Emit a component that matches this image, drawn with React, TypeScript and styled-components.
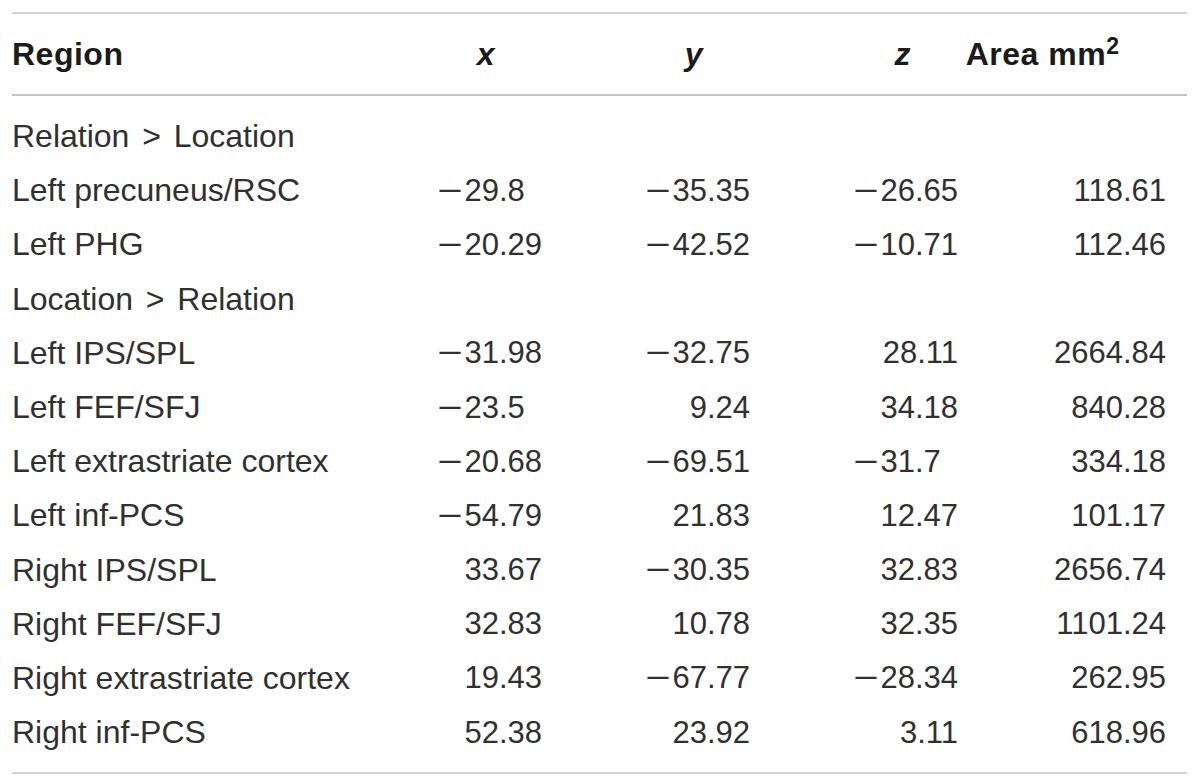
import React from 'react';
import styled, {createGlobalStyle} from 'styled-components';

const GlobalStyle = createGlobalStyle`
  html, body {
    margin: 0;
    padding: 0;
    background: #ffffff;
  }
  body {
    font-family: "Liberation Sans", Arial, sans-serif;
  }
`;

type Row = {
  region: string;
  values?: string[];
};

const rows: Row[] = [
  {region: 'Relation > Location'},
  {region: 'Left precuneus/RSC', values: ['-29.8', '-35.35', '-26.65', '118.61']},
  {region: 'Left PHG', values: ['-20.29', '-42.52', '-10.71', '112.46']},
  {region: 'Location > Relation'},
  {region: 'Left IPS/SPL', values: ['-31.98', '-32.75', '28.11', '2664.84']},
  {region: 'Left FEF/SFJ', values: ['-23.5', '9.24', '34.18', '840.28']},
  {region: 'Left extrastriate cortex', values: ['-20.68', '-69.51', '-31.7', '334.18']},
  {region: 'Left inf-PCS', values: ['-54.79', '21.83', '12.47', '101.17']},
  {region: 'Right IPS/SPL', values: ['33.67', '-30.35', '32.83', '2656.74']},
  {region: 'Right FEF/SFJ', values: ['32.83', '10.78', '32.35', '1101.24']},
  {region: 'Right extrastriate cortex', values: ['19.43', '-67.77', '-28.34', '262.95']},
  {region: 'Right inf-PCS', values: ['52.38', '23.92', '3.11', '618.96']},
];

// the group labels have a wider gap round the ">" sign
function RegionLabel({text}: {text: string}): JSX.Element {
  const parts = text.split(' > ');
  if (parts.length < 2) return <>{text}</>;
  return (
    <>
      {parts[0]}
      <Gt>&gt;</Gt>
      {parts[1]}
    </>
  );
}

// numbers line up on the decimal point, so short ones get an invisible digit
function NumberCell({value}: {value: string}): JSX.Element {
  const negative = value.startsWith('-');
  const digits = negative ? value.slice(1) : value;
  const decimals = digits.split('.')[1]?.length ?? 0;
  return (
    <NumCell>
      {negative && <Minus>{'\u2212'}</Minus>}
      {digits}
      {decimals < 2 && <Hidden>{'0'.repeat(2 - decimals)}</Hidden>}
    </NumCell>
  );
}

export default function App(): JSX.Element {
  return (
    <>
      <GlobalStyle />
      <Page>
        <Table>
          <HeaderRow>
            <HeadCell $align="left">Region</HeadCell>
            <HeadCell $align="right">
              <em>x</em>
            </HeadCell>
            <HeadCell $align="right">
              <em>y</em>
            </HeadCell>
            <HeadCell $align="right">
              <em>z</em>
            </HeadCell>
            <HeadCell $align="right">
              Area mm<Sup>2</Sup>
            </HeadCell>
          </HeaderRow>
          <Body>
            {rows.map((row) => (
              <BodyRow key={row.region}>
                <TextCell>
                  <RegionLabel text={row.region} />
                </TextCell>
                {row.values?.map((v, i) => <NumberCell key={i} value={v} />)}
              </BodyRow>
            ))}
          </Body>
        </Table>
      </Page>
    </>
  );
}

const Page = styled.div`
  padding: 12px 13px 0 12px;
  width: 1175px;
`;

const Table = styled.div`
  border-top: 2px solid #d2d2d2;
  border-bottom: 2px solid #d2d2d2;
`;

const Grid = styled.div`
  display: grid;
  grid-template-columns: 322px 208px 208px 208px 208px;
  align-items: center;
`;

const HeaderRow = styled(Grid)`
  height: 80px;
  border-bottom: 2px solid #c4c4c4;
`;

const HeadCell = styled.div<{$align: 'left' | 'right'}>`
  text-align: ${(p) => p.$align};
  padding-right: ${(p) => (p.$align === 'right' ? '47px' : '0')};
  font-size: 32px;
  font-weight: 700;
  letter-spacing: 0.5px;
  color: #1b1b1b;
  line-height: 1;
  white-space: nowrap;

  em {
    font-style: italic;
  }
`;

const Sup = styled.sup`
  font-size: 23px;
  line-height: 0;
  letter-spacing: 0;
  vertical-align: 0.5em;
`;

const Body = styled.div`
  padding: 13px 0;
`;

const BodyRow = styled(Grid)`
  height: 54.2px;
`;

const TextCell = styled.div`
  font-size: 32px;
  color: #303030;
  line-height: 1;
  white-space: nowrap;
`;

const Gt = styled.span`
  margin: 0 0.4em;
`;

const NumCell = styled.div`
  text-align: right;
  font-size: 31px;
  color: #303030;
  line-height: 1;
  white-space: nowrap;
`;

const Minus = styled.span`
  display: inline-block;
  width: 0.88em;
  text-align: left;
  transform: scaleX(1.4);
  transform-origin: left center;
`;

const Hidden = styled.span`
  visibility: hidden;
`;
